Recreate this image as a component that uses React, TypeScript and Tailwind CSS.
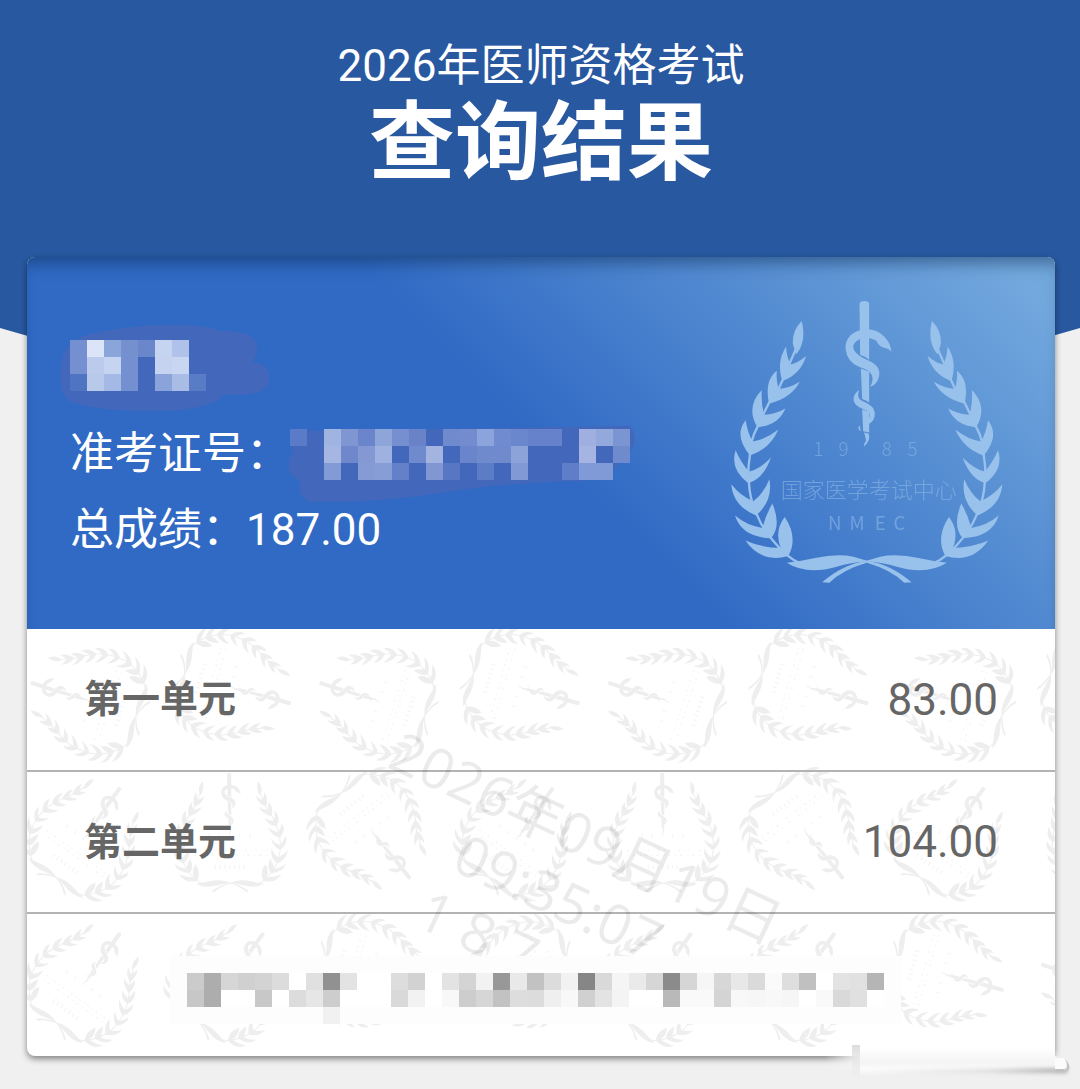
import React from 'react';

interface EmblemArtProps {
  withText?: boolean;
}

interface MosaicProps {
  rows: string[][];
  className?: string;
  children?: React.ReactNode;
}

const CELL = 17;

const units = [
  { name: '第一单元', score: '83.00' },
  { name: '第二单元', score: '104.00' },
];

// x, y, rotation of every emblem in the paper pattern
const patternMarks = [
  [62, 71, -72], [207, 59, 106], [350, 71, -72], [495, 59, 106], [638, 71, -72], [783, 59, 106], [926, 71, -72], [1071, 59, 106],
  [60, 207, 36], [204, 203, 0], [346, 203, 142], [492, 207, 36], [636, 203, 0], [778, 203, 142], [922, 207, 36], [1070, 203, -20],
  [60, 352, 36], [203, 352, 36], [347, 345, 106], [492, 346, -108], [630, 352, 36], [773, 352, 36], [918, 345, 106], [1070, 352, -72],
];

const nameCells = [
  '7590d0 dbe5f7 8aa5da 7490cf 6b87cc c5d4f0 b0c2e9 -'.split(' '),
  '7590d0 bccbeb c5d4f0 7590d0 - c5d2f0 c8d6f1 -'.split(' '),
  '4f74c2 b8c9ea a5b9e6 7590d0 - 8aa3da a8bce6 5a7bc6'.split(' '),
];

const ticketCells = [
  '5a7bc8 - a0b4e2 7f96d2 6a85cb 8ea5da 758fd0 6a83c8 - 6f8acd 728ccf 8ba4db 708bcf 6a86cc 6582cb 6582cb - 9fb0e0 93a9dd 7b95d2'.split(' '),
  '- - a5b6e3 6f88cc 8499d4 9fb1e1 - 6f8acd a3b4e1 - 6a85cb 6f8acd 6f8acd 8ca3d9 - - - a5b4e0 - 6f8acd'.split(' '),
  '- - 829ad5 - 849bd5 869dd5 6480c8 - 8097d4 5777c4 - 5c7cc6 - 8199d4 - - 5f7dc8 809ad8 809ad8 -'.split(' '),
];

const noticeCells = [
  'cbcbcb adadad d6d6d6 d0d0d0 d3d3d3 dcdcdc fff e0e0e0 919191 e3e3e3 fff fff ddd d2d2d2 fff e3e3e3 d4d4d4 f2f2f2 989898 e9e9e9 c2c2c2 dcdcdc f2f2f2 868686 d9d9d9 f5f5f5 eaeaea d6d6d6 8b8b8b d6d6d6 f6f6f6 d7d7d7 e8e8e8 dadada fafafa dedede c0c0c0 fff e3e3e3 e1e1e1 b5b5b5'.split(' '),
  'c7c7c7 adadad fff fff c8c8c8 fff dcdcdc e6e6e6 cdcdcd fff fff fff d9d9d9 f2f2f2 fff f8f8f8 cdcdcd d6d6d6 c2c2c2 ddd dcdcdc efefef f8f8f8 d0d0d0 e3e3e3 f4f4f4 fff fff b9b9b9 f9f9f9 f9f9f9 d4d4d4 f8f8f8 f6f6f6 f8f8f8 f6f6f6 fff f9f9f9 d9d9d9 e0e0e0 fff'.split(' '),
];

const Mosaic: React.FC<MosaicProps> = ({ rows, className, children }) => (
  <svg
    width={rows[0].length * CELL}
    height={rows.length * CELL}
    className={className}
    shapeRendering="crispEdges"
    aria-hidden="true"
  >
    {children}
    {rows.map((row, y) =>
      row.map((color, x) =>
        color === '-' ? null : (
          <rect key={`${x}-${y}`} x={x * CELL} y={y * CELL} width={CELL} height={CELL} fill={`#${color}`} />
        )
      )
    )}
  </svg>
);

const Branch = () => (
  <>
    <path d="M305 122 Q276 150 278 190 L288 222 Q320 185 305 122Z" />
    <path d="M247 302 Q228 245 258 198 Q260 232 272 252 Q290 250 318 227 Q302 282 247 302Z" />
    <path d="M207 370 Q192 300 230 271 Q228 300 236 325 Q265 325 299 304 Q275 352 207 370Z" />
    <path d="M172 440 Q136 380 185 329 Q183 370 192 403 Q225 402 256 384 Q235 435 172 440Z" />
    <path d="M150 525 Q100 465 137 419 Q142 455 158 483 Q195 478 235 447 Q210 505 150 525Z" />
    <path d="M145 608 Q88 565 107 509 Q122 545 147 573 Q180 565 213 531 Q190 595 145 608Z" />
    <path d="M168 705 Q98 675 94 611 Q120 645 160 662 Q190 640 208 596 Q220 660 168 705Z" />
    <path d="M213 773 Q125 770 105 705 Q140 735 187 742 Q198 700 217 669 Q245 735 213 773Z" />
    <path d="M265 826 Q185 850 136 780 Q180 800 242 802 Q222 750 254 709 Q295 770 265 826Z" />
    <path
      d="M290 200 Q268 250 248 298 T208 365 Q190 400 172 440 Q150 480 149 530 Q142 570 147 610 Q150 660 172 705 Q190 750 225 787 Q260 830 300 848"
      fill="none"
      stroke="currentColor"
      strokeWidth="7"
    />
    <path d="M260 846 Q300 842 345 832 Q410 818 460 828 L506 842 Q450 846 410 858 Q320 884 260 846Z" />
    <path d="M500 840 Q425 852 366 905 L388 906 Q425 868 500 846Z" />
  </>
);

const EmblemArt: React.FC<EmblemArtProps> = ({ withText }) => (
  <g fill="currentColor">
    <Branch />
    <g transform="translate(1000 0) scale(-1 1)">
      <Branch />
    </g>
    <path d="M478 72 Q478 62 492 62 Q507 62 507 72 L507 238 Q495 228 480 224Z" />
    <path d="M482 264 L507 274 L507 366 Q496 358 486 356Z" />
    <path d="M486 386 L507 394 L507 456 L489 452Z" />
    <path d="M574 214 Q566 204 552 202 Q534 196 528 180 Q500 166 480 176 Q452 188 462 210 Q474 228 505 240 Q542 256 537 286 Q532 312 510 320 Q522 296 514 282 Q506 268 478 260 Q440 244 436 204 Q436 160 484 148 Q526 142 552 168 Q568 184 572 204Z" />
    <path d="M477 328 Q456 344 461 362 Q466 378 490 386 Q512 392 508 406 Q506 420 504 432 Q526 420 524 396 Q520 376 496 366 Q474 358 474 346 Q474 336 477 328Z" />
    <path d="M478 434 Q470 444 482 452 Q480 442 478 434Z M492 456 L506 460 Q512 480 492 498 Q490 490 498 480Z" />
    {withText ? (
      <g className="font-['Noto_Sans_CJK_SC',sans-serif] font-light" opacity="0.5">
        <text y="525" fontSize="56" x="340 415 545 622">1985</text>
        <text x="242" y="651" fontSize="66">国家医学考试中心</text>
        <text y="747" fontSize="56" x="384 448 524 580" className="font-normal">NMEC</text>
      </g>
    ) : (
      <g fill="none" stroke="currentColor" opacity="0.5">
        <path d="M345 505 H660" strokeWidth="26" strokeDasharray="10 62" />
        <path d="M245 612 H770" strokeWidth="12" strokeDasharray="14 30 6 22" />
        <path d="M250 645 H770" strokeWidth="12" strokeDasharray="8 26 16 34" />
        <path d="M390 728 H615" strokeWidth="30" strokeDasharray="10 24" />
      </g>
    )}
  </g>
);

const PaperPattern = () => (
  <svg
    className="absolute inset-0 h-full w-full text-[#eee]"
    viewBox="0 0 1028 426"
    preserveAspectRatio="xMidYMid slice"
    aria-hidden="true"
  >
    {patternMarks.map(([x, y, angle]) => (
      <g key={`${x}-${y}`} transform={`translate(${x} ${y}) rotate(${angle}) scale(0.141) translate(-500 -485)`}>
        <EmblemArt />
      </g>
    ))}
  </svg>
);

const TimeWatermark = () => (
  <div className="pointer-events-none absolute inset-0 flex items-center justify-center pt-[106px] pl-9">
    <div className="shrink-0 rotate-[25deg] text-center font-['Open_Sans','Noto_Sans_CJK_SC',sans-serif] text-[56px] leading-[66px] whitespace-nowrap text-black/8">
      <p>2026年09月19日</p>
      <p>09:35:07</p>
      <p className="mx-auto w-60 text-left">1 8 7</p>
    </div>
  </div>
);

const CornerSmear = () => (
  <svg className="absolute -right-4 -bottom-9 h-[52px] w-[260px]" viewBox="0 0 260 52" aria-hidden="true">
    <defs>
      <linearGradient id="fade" x1="0" x2="1">
        <stop offset="0" stopColor="#f1f1f1" stopOpacity="0" />
        <stop offset="0.15" stopColor="#f3f3f3" />
        <stop offset="1" stopColor="#f2f2f2" />
      </linearGradient>
      <linearGradient id="paper" x1="0" x2="0" y1="0" y2="1">
        <stop offset="0" stopColor="#fff" />
        <stop offset="0.5" stopColor="#f4f4f4" />
        <stop offset="0.75" stopColor="#fbfbfb" />
        <stop offset="1" stopColor="#f0f0f0" />
      </linearGradient>
      <linearGradient id="crease" x1="0" x2="1">
        <stop offset="0" stopColor="#ddd" stopOpacity="0" />
        <stop offset="0.6" stopColor="#ddd" />
        <stop offset="1" stopColor="#a8a8a8" />
      </linearGradient>
      <linearGradient id="bar" x1="0" x2="0" y1="0" y2="1">
        <stop offset="0" stopColor="#ddd" />
        <stop offset="1" stopColor="#eee" stopOpacity="0.3" />
      </linearGradient>
      <filter id="soft" x="-5%" y="-100%" width="110%" height="300%">
        <feGaussianBlur stdDeviation="2" />
      </filter>
    </defs>
    <rect x="14" y="16" width="232" height="14" fill="url(#fade)" />
    <rect x="49" y="8" width="195" height="28" fill="url(#paper)" />
    <path d="M60 30 L256 28 V33 L60 34Z" fill="url(#crease)" filter="url(#soft)" />
    <path d="M244 18 H253 Q258 25 254 29 H244Z" fill="#fbfbfb" />
    <path d="M254 19 Q263 28 254 33 Q258 26 254 19Z" fill="#c4c4c4" />
    <rect x="41" y="5" width="8" height="34" fill="url(#bar)" />
  </svg>
);

const App = () => {
  return (
    <main className="relative min-h-screen overflow-hidden bg-[#f0f0f0] font-[Roboto,'Noto_Sans_CJK_SC',sans-serif]">
      <div className="absolute inset-x-0 top-0">
        <div className="h-[328px] bg-[#28589f]" />
        <svg className="block h-20 w-full" viewBox="0 0 1080 80" preserveAspectRatio="none" aria-hidden="true">
          <path d="M0 0 Q540 160 1080 0Z" fill="#28589f" />
        </svg>
      </div>

      <div className="relative pt-10 pr-[25px] pb-[34px] pl-[27px]">
        <h1 className="mb-[61px] text-center text-white">
          <span className="block text-[44px] leading-[52px] font-normal">2026年医师资格考试</span>
          <span className="block text-[86px] leading-[104px] font-bold">查询结果</span>
        </h1>

        <div className="relative">
          <section className="overflow-hidden rounded-lg bg-white shadow-[0_3px_6px_rgba(0,0,0,0.45)]">
            <div className="flex items-start justify-between bg-[linear-gradient(45deg,#306ac4_50%,#72a8dd_96%)] pr-12 pl-[43px] text-white shadow-[inset_0_14px_16px_-8px_rgba(10,40,80,0.5)]">
              <div className="pt-[83px] pb-[61px]">
                <Mosaic rows={nameCells} className="overflow-visible">
                  <path
                    d="M-8 20 Q-4 0 20 -6 Q60 -16 110 -15 Q140 -14 150 -9 Q186 -10 187 8 Q188 16 182 22 Q204 24 198 45 Q190 58 154 54 Q146 66 110 70 Q40 74 0 62 Q-14 50 -8 20Z"
                    fill="#4267bb"
                    shapeRendering="auto"
                  />
                </Mosaic>
                <dl className="mt-[25px] text-[44px] leading-[76px]">
                  <div className="flex items-center">
                    <dt>准考证号：</dt>
                    <dd>
                      <Mosaic rows={ticketCells} className="overflow-visible">
                        <path
                          d="M4 2 L340 -3 Q348 8 342 20 L328 36 Q320 50 290 52 Q210 54 150 64 Q90 74 20 73 Q6 68 10 52 Q-8 44 2 24Z"
                          fill="#4267bb"
                          shapeRendering="auto"
                        />
                      </Mosaic>
                    </dd>
                  </div>
                  <div className="flex items-center">
                    <dt>总成绩：</dt>
                    <dd>187.00</dd>
                  </div>
                </dl>
              </div>
              <svg
                className="mt-10 h-[287px] w-[277px] shrink-0 text-[#98c1ec]"
                viewBox="90 50 830 860"
                role="img"
                aria-label="国家医学考试中心"
              >
                <EmblemArt withText />
              </svg>
            </div>

            <div className="relative text-[#666]">
              <PaperPattern />
              <table className="relative w-full border-collapse">
                <tbody>
                  {units.map((unit) => (
                    <tr key={unit.name} className="h-[142px] border-b-2 border-[#b3b3b3]">
                      <th scope="row" className="pl-[57px] text-left text-[38px] font-bold">
                        {unit.name}
                      </th>
                      <td className="pr-[57px] text-right text-[44px]">{unit.score}</td>
                    </tr>
                  ))}
                </tbody>
              </table>
              <TimeWatermark />
              <div className="relative flex h-[142px] items-center justify-center pt-[10px] pr-3">
                <Mosaic rows={noticeCells} className="overflow-visible">
                  <rect x="-17" y="-17" width="731" height="68" fill="#fdfdfd" />
                  <rect x="136" y="34" width="17" height="17" fill="#f1f1f1" />
                </Mosaic>
              </div>
            </div>
          </section>
          <CornerSmear />
        </div>
      </div>
    </main>
  );
};

export default App;
